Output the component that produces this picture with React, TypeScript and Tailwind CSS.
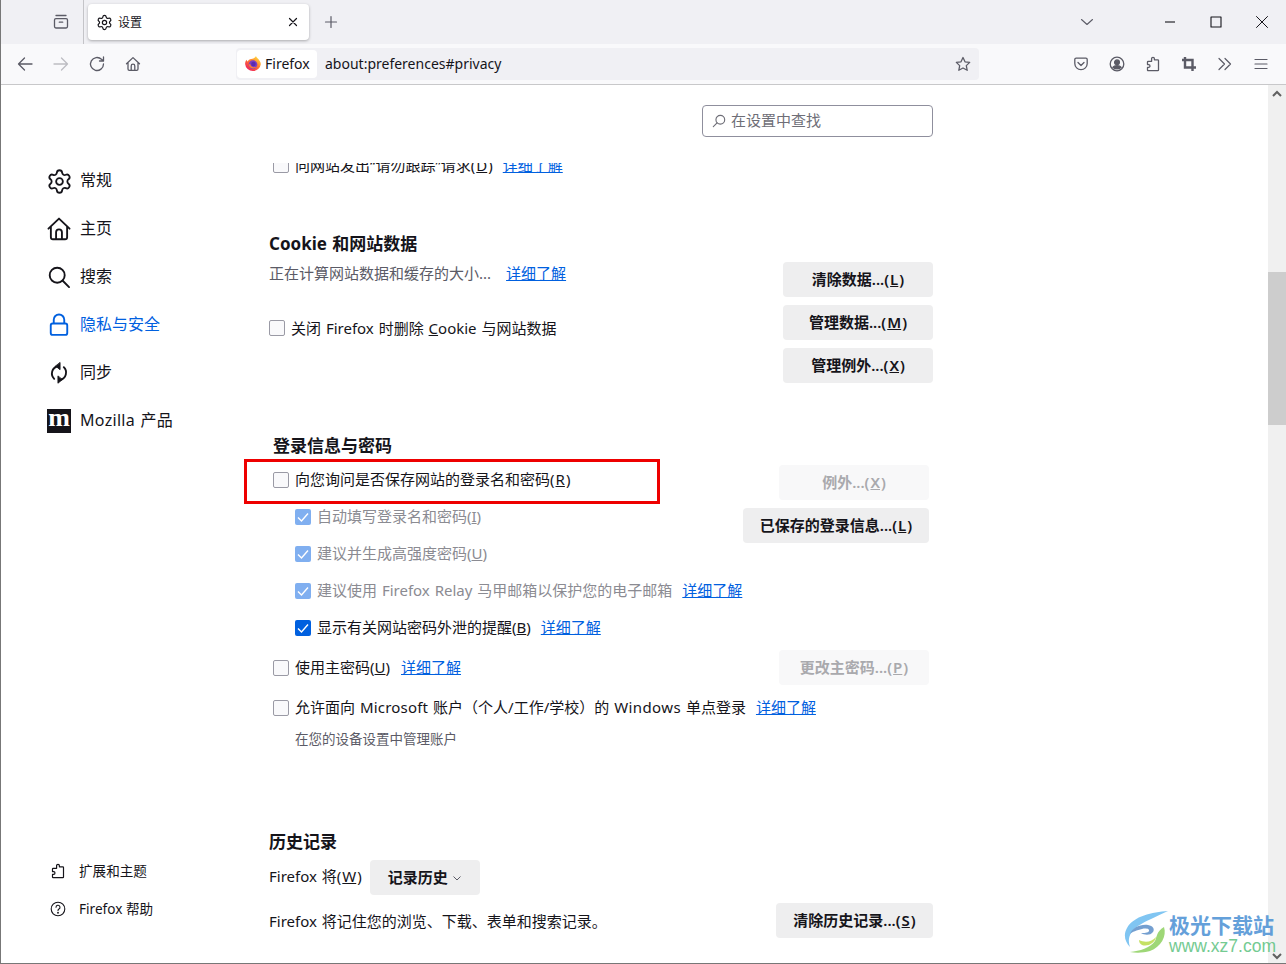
import type { ReactNode } from "react";
import { Settings } from "lucide-react";

const FONT = "font-['Noto_Sans','Noto_Sans_CJK_SC',sans-serif]";

function Checkbox({ checked, dim, flush }: { checked?: boolean; dim?: boolean; flush?: boolean }) {
    const offset = flush ? "" : "mt-[2px]";
    if (checked) {
        return (
            <span
                className={`flex h-4 w-4 shrink-0 items-center justify-center rounded-[2px] ${offset} ${dim ? "bg-[#80aff0]" : "bg-[#0060df]"}`}
            >
                <svg width="14" height="14" viewBox="0 0 14 14" fill="none">
                    <path d="M2 7.5 5.5 11 12 3.5" stroke="white" strokeWidth="1.4" />
                </svg>
            </span>
        );
    }
    return <span className={`h-4 w-4 shrink-0 rounded-[2px] border border-[#9a9aa5] bg-[#f9f9fb] ${offset}`} />;
}

function Learn() {
    return <a className="text-[#0060df] underline">详细了解</a>;
}

// access key in a label, a bit wider than the plain text around it
function Key({ k }: { k: string }) {
    return (
        <>
            (<u className="mx-px">{k}</u>)
        </>
    );
}

function Btn({ children, className = "", disabled }: { children: ReactNode; className?: string; disabled?: boolean }) {
    return (
        <button
            className={`flex h-[35px] items-center justify-center rounded-[4px] text-[15px] font-semibold ${disabled ? "bg-[#f8f8f9] text-[#a9a9ad]" : "bg-[#eeeeef] text-[#15141a]"} ${className}`}
        >
            {children}
        </button>
    );
}

function Row({ children, className = "" }: { children: ReactNode; className?: string }) {
    return <div className={`flex h-[22px] items-center whitespace-nowrap leading-[22px] ${className}`}>{children}</div>;
}

function Heading({ children, className = "" }: { children: ReactNode; className?: string }) {
    return <h2 className={`h-6 text-[17px] font-bold leading-[26px] text-[#15141a] ${className}`}>{children}</h2>;
}

function SideItem({ icon, label, active }: { icon: ReactNode; label: string; active?: boolean }) {
    return (
        <div className={`flex h-12 items-center gap-[9px] pl-[46px] text-[16px] ${active ? "text-[#0060df]" : "text-[#15141a]"}`}>
            <span className="flex h-6 w-6 shrink-0 items-center justify-center">{icon}</span>
            <span className="mb-[2px]">{label}</span>
        </div>
    );
}

function Icon({ size = 16, box = 16, color = "#5b5b66", width = 1.3, children }: { size?: number; box?: number; color?: string; width?: number; children: ReactNode }) {
    return (
        <svg className="shrink-0" width={size} height={size} viewBox={`0 0 ${box} ${box}`} fill="none" stroke={color} strokeWidth={width} strokeLinecap="round" strokeLinejoin="round">
            {children}
        </svg>
    );
}

const HOUSE = "M1.5 7.8 8 1.6l6.5 6.2M3 6.6V13a1.3 1.3 0 0 0 1.3 1.3h7.4A1.3 1.3 0 0 0 13 13V6.6M6.2 14.2V10a1.8 1.8 0 0 1 3.6 0v4.2";
const PUZZLE =
    "M6.6 2.6c0-1.6 2.8-1.6 2.8.2v1h3.4c.4 0 .7.3.7.7V14c0 .4-.3.7-.7.7H3.2c-.4 0-.7-.3-.7-.7v-2.6h1.2c1.7 0 1.7-2.8 0-2.8H2.500V6c0-.4.3-.7.7-.7h3.400z";

function FirefoxLogo() {
    return (
        <svg className="shrink-0" width="16" height="16" viewBox="0 0 16 16">
            <defs>
                <linearGradient id="ff" x1="0.8" y1="0.1" x2="0.2" y2="0.9">
                    <stop offset="0" stopColor="#ffd43a" />
                    <stop offset="0.45" stopColor="#ff7a2f" />
                    <stop offset="1" stopColor="#f0245c" />
                </linearGradient>
            </defs>
            <path d="M11 0c.3 1.500 1.200 1.600 2.300 3 1.300 1.500 2.500 3.300 2.500 5.200A7.900 7.800 0 0 1 .1 8c0-1.800.7-3.400 1.500-4.300.2 1 .7 1.500 1.200 1.700C3.300 4 4.700 3 6.200 3c1.500-.2 4-1 4.800-3z" fill="url(#ff)" />
            <circle cx="8" cy="8.600" r="4.300" fill="#7b3ec2" />
            <circle cx="8.400" cy="8" r="2.300" fill="#5a2bb0" />
            <path d="M3.700 8.500c.4 2.600 2.500 4.200 5 4 1.800-.2 3-1.300 3.500-2.500-1 1-3 1.700-4.500 1-1.400-.6-2.400-1.500-2.400-3z" fill="#ff7d2e" />
        </svg>
    );
}

function TabBar() {
    return (
        <div className="flex h-11 items-stretch bg-[#f0f0f4]">
            <div className="flex w-[83px] items-center justify-end border-r border-[#c4c4c8] pr-[14px]">
                <Icon size={16} color="#5b5b66">
                    <path d="M3 1.500h10M1.500 6c0-.8.6-1.400 1.400-1.400h10.200c.8 0 1.400.6 1.400 1.400v6.600c0 .8-.6 1.400-1.400 1.400H2.900c-.8 0-1.400-.6-1.400-1.400zM6.300 8.200h3.400" />
                </Icon>
            </div>
            <div className="ml-1 mt-1 flex h-9 w-[221px] items-center rounded-[4px] bg-white pl-2 pr-2 shadow-[0_1px_3px_rgba(0,0,0,0.3)]">
                <Settings size={17} strokeWidth={1.7} color="#15141a" className="shrink-0" />
                <span className="ml-[5px] mt-px flex-1 text-[12px] text-[#15141a]">设置</span>
                <Icon size={16} color="#15141a" width={1.2}>
                    <path d="m4.500 4.500 7 7M11.500 4.500l-7 7" />
                </Icon>
            </div>
            <div className="ml-[14px] flex items-center">
                <Icon size={16} color="#5b5b66" width={1.2}>
                    <path d="M8 2.500v11M2.500 8h11" />
                </Icon>
            </div>
            <div className="ml-auto flex items-center pr-[16px]">
                <span className="mr-[67px]">
                    <Icon size={16} color="#5b5b66" width={1.1}>
                        <path d="m2.500 5.500 5.500 5 5.500-5" />
                    </Icon>
                </span>
                <span className="mr-[30px]">
                    <Icon size={16} color="#15141a" width={1.1}>
                        <path d="M3 8h10" strokeLinecap="butt" />
                    </Icon>
                </span>
                <span className="mr-[30px]">
                    <Icon size={16} color="#15141a" width={1.1}>
                        <rect x="3" y="3" width="10" height="10" />
                    </Icon>
                </span>
                <Icon size={16} color="#15141a" width={1}>
                    <path d="m2.500 2.500 11 11M13.500 2.500l-11 11" />
                </Icon>
            </div>
        </div>
    );
}

function NavBar() {
    return (
        <div className="flex h-[41px] items-center border-b border-[#c8c8ca] bg-[#f9f9fb]">
            <div className="flex w-[235px] items-center gap-5 pl-4">
                <Icon>
                    <path d="M15 8H1.500M7.500 2 1.500 8l6 6" />
                </Icon>
                <Icon color="#bdbdc2">
                    <path d="M1 8h13.500M8.500 2l6 6-6 6" />
                </Icon>
                <Icon>
                    <path d="M14.500 8a6.500 6.500 0 1 1-2-4.700L14.500 5M14.500 1v4h-4" />
                </Icon>
                <Icon>
                    <path d={HOUSE} />
                </Icon>
            </div>
            <div className="flex h-8 w-[743px] items-center rounded-[4px] bg-[#f0f0f4] text-[14px] text-[#15141a]">
                <div className="ml-px flex h-7 w-[80px] items-center gap-1 rounded-[4px] bg-white pl-2">
                    <FirefoxLogo />
                    <span className="mb-[2px]">Firefox</span>
                </div>
                <span className="mb-[2px] ml-2 flex-1">about:preferences#privacy</span>
                <span className="mr-2">
                    <Icon>
                        <path d="m8 1.500 2 4.300 4.700.6-3.400 3.200.9 4.700L8 12l-4.200 2.300.9-4.700L1.300 6.400 6 5.800z" />
                    </Icon>
                </span>
            </div>
            <div className="ml-auto flex items-center gap-5 pr-[17px]">
                <Icon>
                    <path d="M1.800 3.500c0-.8.6-1.300 1.300-1.300h9.800c.7 0 1.300.5 1.300 1.300v4a6.200 6.200 0 0 1-12.400 0zM5 6.500l3 3 3-3" />
                </Icon>
                <Icon>
                    <circle cx="8" cy="8" r="6.800" />
                    <circle cx="8" cy="6.300" r="2.400" fill="#5b5b66" />
                    <path d="M3.800 11.300c1-1.300 2.500-1.600 4.200-1.600s3.200.3 4.200 1.600c-2 2-6.400 2-8.400 0z" fill="#5b5b66" />
                </Icon>
                <Icon>
                    <path d={PUZZLE} />
                </Icon>
                <Icon width={2.4}>
                    <path d="M4 1v10.500h11M1 4h10.500v11" strokeLinecap="butt" strokeLinejoin="miter" />
                </Icon>
                <Icon width={1.2}>
                    <path d="m2 2.500 5.500 5.500L2 13.500M8 2.500l5.500 5.500L8 13.500" />
                </Icon>
                <Icon width={1.2}>
                    <path d="M2 3.500h12M2 8h12M2 12.500h12" />
                </Icon>
            </div>
        </div>
    );
}

function Sidebar() {
    return (
        <aside className="flex w-[268px] shrink-0 flex-col pt-[72px]">
            <SideItem label="常规" icon={<Settings size={27} strokeWidth={1.6} color="#15141a" className="shrink-0" />} />
            <SideItem
                label="主页"
                icon={
                    <Icon size={26} color="#15141a" width={1.15}>
                        <path d={HOUSE} />
                    </Icon>
                }
            />
            <SideItem
                label="搜索"
                icon={
                    <Icon size={24} color="#15141a" width={1.25}>
                        <circle cx="6.800" cy="6.800" r="5" />
                        <path d="m10.500 10.500 4.200 4.200" />
                    </Icon>
                }
            />
            <SideItem
                active
                label="隐私与安全"
                icon={
                    <Icon size={24} color="#0060df" width={1.25}>
                        <path d="M4.500 7V4.500a3.500 3.500 0 0 1 7 0V7M3.800 7h8.400c.7 0 1.300.6 1.300 1.300v5c0 .7-.6 1.300-1.300 1.300H3.800c-.7 0-1.300-.6-1.300-1.300v-5C2.500 7.600 3.100 7 3.800 7z" />
                    </Icon>
                }
            />
            <SideItem
                label="同步"
                icon={
                    <Icon size={24} color="#15141a" width={1.25}>
                        <path d="M7 3.500A5 5 0 0 0 4.800 11.900M9 12.500A5 5 0 0 0 11.200 4.100" />
                        <path d="M8.700 1.200v4.600L5.900 3.500zM7.300 10.200v4.600l2.800-2.300z" fill="#15141a" strokeWidth={0.6} />
                    </Icon>
                }
            />
            <div className="flex h-12 items-center gap-[9px] pl-[46px] text-[16px] text-[#15141a]">
                <span className="flex h-6 w-6 shrink-0 items-center justify-center bg-[#15141a] pb-[6px] font-['Liberation_Serif',serif] text-[26px] font-bold leading-[18px] text-white">
                    m
                </span>
                <span className="mb-[2px] tracking-[0.3px] [word-spacing:1px]">Mozilla 产品</span>
            </div>
            <div className="mt-auto pb-[35px] text-[13.6px] text-[#15141a]">
                <div className="flex h-[38px] items-center gap-[13px] pl-[49px]">
                    <Icon size={16} color="#15141a" width={1.2}>
                        <path d={PUZZLE} />
                    </Icon>
                    <span>扩展和主题</span>
                </div>
                <div className="flex h-[38px] items-center gap-[13px] pl-[49px]">
                    <Icon size={16} color="#15141a" width={1.1}>
                        <circle cx="8" cy="8" r="6.800" />
                        <path d="M6 6.300a2 2 0 1 1 3 1.700c-.7.400-1 .8-1 1.500" />
                        <circle cx="8" cy="11.700" r=".4" />
                    </Icon>
                    <span>Firefox 帮助</span>
                </div>
            </div>
        </aside>
    );
}

function Content() {
    return (
        <main className="relative flex w-[664px] shrink-0 flex-col text-[15px] text-[#15141a] [word-spacing:1px]">
            <div className="flex h-[78px] shrink-0 items-start justify-end pt-5">
                <div className="flex h-8 w-[231px] items-center gap-[5px] rounded-[4px] border border-[#8f8f9d] pl-[9px] text-[#6e6e77]">
                    <Icon size={14} box={16} color="#6e6e77" width={1.3}>
                        <circle cx="9.500" cy="6.500" r="5" />
                        <path d="M5.800 10.200 1.500 14.500" />
                    </Icon>
                    <span className="mb-[2px]">在设置中查找</span>
                </div>
            </div>

            <div className="flex-1 overflow-hidden">
                <Row className="-mt-[9px] gap-[6px] pl-1">
                    <Checkbox flush />
                    <span className="mr-[4px]">
                        向网站发出“请勿跟踪”请求(<u className="mx-px">D</u>)
                    </span>
                    <Learn />
                </Row>

                <Heading className="mt-[55px]">Cookie 和网站数据</Heading>
                <div className="mt-[7px] flex justify-between">
                    <div>
                        <Row className="text-[#5b5b66]">
                            <span className="mr-[15px]">正在计算网站数据和缓存的大小...</span>
                            <Learn />
                        </Row>
                        <Row className="mt-[33px] gap-[6px]">
                            <Checkbox flush />
                            <span>
                                关闭 Firefox 时删除 <u>C</u>ookie 与网站数据
                            </span>
                        </Row>
                    </div>
                    <div className="flex w-[150px] flex-col gap-2">
                        <Btn>
                            清除数据...
                            <Key k="L" />
                        </Btn>
                        <Btn>
                            管理数据...
                            <Key k="M" />
                        </Btn>
                        <Btn>
                            管理例外...
                            <Key k="X" />
                        </Btn>
                    </div>
                </div>

                <div className="px-1">
                    <Heading className="mt-[50px]">登录信息与密码</Heading>
                    <div className="mt-2 flex justify-between">
                        <div className="flex w-[470px] flex-col gap-[15px] pt-[3px]">
                            <Row className="gap-[6px]">
                                <Checkbox />
                                <span>
                                    向您询问是否保存网站的登录名和密码
                                    <Key k="R" />
                                </span>
                            </Row>
                            <Row className="gap-[6px] pl-[22px] text-[#8b8b92]">
                                <Checkbox checked dim />
                                <span>
                                    自动填写登录名和密码(<u>I</u>)
                                </span>
                            </Row>
                            <Row className="gap-[6px] pl-[22px] text-[#8b8b92]">
                                <Checkbox checked dim />
                                <span>
                                    建议并生成高强度密码(<u>U</u>)
                                </span>
                            </Row>
                            <Row className="gap-[6px] pl-[22px] text-[#8b8b92]">
                                <Checkbox checked dim />
                                <span className="mr-1">建议使用 Firefox Relay 马甲邮箱以保护您的电子邮箱</span>
                                <Learn />
                            </Row>
                            <Row className="gap-[6px] pl-[22px]">
                                <Checkbox checked />
                                <span className="mr-[4px]">
                                    显示有关网站密码外泄的提醒(<u>B</u>)
                                </span>
                                <Learn />
                            </Row>
                        </div>
                        <div className="flex flex-col items-end gap-2">
                            <Btn disabled className="w-[150px]">
                                例外...
                                <Key k="X" />
                            </Btn>
                            <Btn className="w-[186px]">
                                已保存的登录信息...
                                <Key k="L" />
                            </Btn>
                        </div>
                    </div>

                    <div className="mt-3 flex items-center justify-between">
                        <Row className="mb-[2px] gap-[6px]">
                            <Checkbox />
                            <span className="mr-[5px]">
                                使用主密码(<u>U</u>)
                            </span>
                            <Learn />
                        </Row>
                        <Btn disabled className="w-[150px]">
                            更改主密码...
                            <Key k="P" />
                        </Btn>
                    </div>

                    <Row className="mt-[11px] gap-[6px]">
                        <Checkbox />
                        <span className="mr-1">
                            允许面向 <span className="tracking-[0.2px]">Microsoft</span> 账户（个人/工作/学校）的{" "}
                            <span className="tracking-[0.4px]">Windows</span> 单点登录
                        </span>
                        <Learn />
                    </Row>
                    <div className="mt-[11px] h-5 pl-[22px] text-[13.5px] leading-5 text-[#5b5b66]">在您的设备设置中管理账户</div>
                </div>

                <Heading className="mt-20">历史记录</Heading>
                <div className="mt-[7px] flex items-center gap-2">
                    <span className="mb-[2px]">
                        Firefox 将
                        <Key k="W" />
                    </span>
                    <Btn className="w-[110px] gap-1">
                        记录历史
                        <svg width="10" height="10" viewBox="0 0 10 10" fill="none" stroke="#5b5b66">
                            <path d="m1.500 3.500 3.500 3.500 3.500-3.500" />
                        </svg>
                    </Btn>
                </div>
                <div className="mt-2 flex items-center justify-between">
                    <span className="mt-[2px]">Firefox 将记住您的浏览、下载、表单和搜索记录。</span>
                    <Btn className="w-[157px]">
                        清除历史记录...
                        <Key k="S" />
                    </Btn>
                </div>
            </div>

            <div className="pointer-events-none absolute left-[-25px] top-[374px] h-[45px] w-[416px] border-[3px] border-[#ee0000]" />
        </main>
    );
}

function Scrollbar() {
    return (
        <div className="flex w-[18px] shrink-0 flex-col items-center bg-[#f0f0f0]">
            <svg className="mt-[5px]" width="12" height="8" viewBox="0 0 12 8" fill="none" stroke="#606060" strokeWidth="2">
                <path d="m2 6 4-4 4 4" />
            </svg>
            <div className="mt-[174px] h-[153px] w-full bg-[#cdcdcd]" />
            <svg className="mt-auto mb-[3px]" width="12" height="8" viewBox="0 0 12 8" fill="none" stroke="#606060" strokeWidth="2">
                <path d="m2 2 4 4 4-4" />
            </svg>
        </div>
    );
}

function Watermark() {
    return (
        <div className="pointer-events-none absolute bottom-[7px] right-[10px] flex items-end opacity-85">
            <svg width="48" height="46" viewBox="0 0 48 46">
                <path d="M46 1C30 2 12 6 5 18c-4 7-2 14 3 19-3-8 0-16 8-21C25 10 36 6 46 1z" fill="#6abcf0" />
                <path d="M8 24c2-6 10-10 18-9 5 1 7 4 5 7-3 4-9 3-12 1 3 0 7 0 8-2 1-2-3-3-7-2-5 1-10 3-12 5z" fill="#5c8fc8" />
                <path d="M42 17c3 9-3 20-14 24-7 2-14 2-20 1 10-1 20-4 25-11 2-4 1-9 9-14z" fill="#8ed160" />
                <path d="M17 30c6 3 13 2 17-3-1 6-8 10-14 8-2-1-3-3-3-5z" fill="#bcdc4a" />
            </svg>
            <div className="-ml-[1px] flex flex-col">
                <span className="text-[21px] font-bold leading-[24px] text-[#4a90d4]">极光下载站</span>
                <span className="font-['Liberation_Sans',sans-serif] text-[17.500px] leading-[19px] text-[#5cc280]">www.xz7.com</span>
            </div>
        </div>
    );
}

export default function App() {
    return (
        <div className={`relative flex h-[964px] w-[1286px] flex-col overflow-hidden border-b border-l border-[#777777] bg-white ${FONT}`}>
            <TabBar />
            <NavBar />
            <div className="flex min-h-0 flex-1">
                <Sidebar />
                <Content />
                <div className="flex-1" />
                <Scrollbar />
            </div>
            <Watermark />
        </div>
    );
}
